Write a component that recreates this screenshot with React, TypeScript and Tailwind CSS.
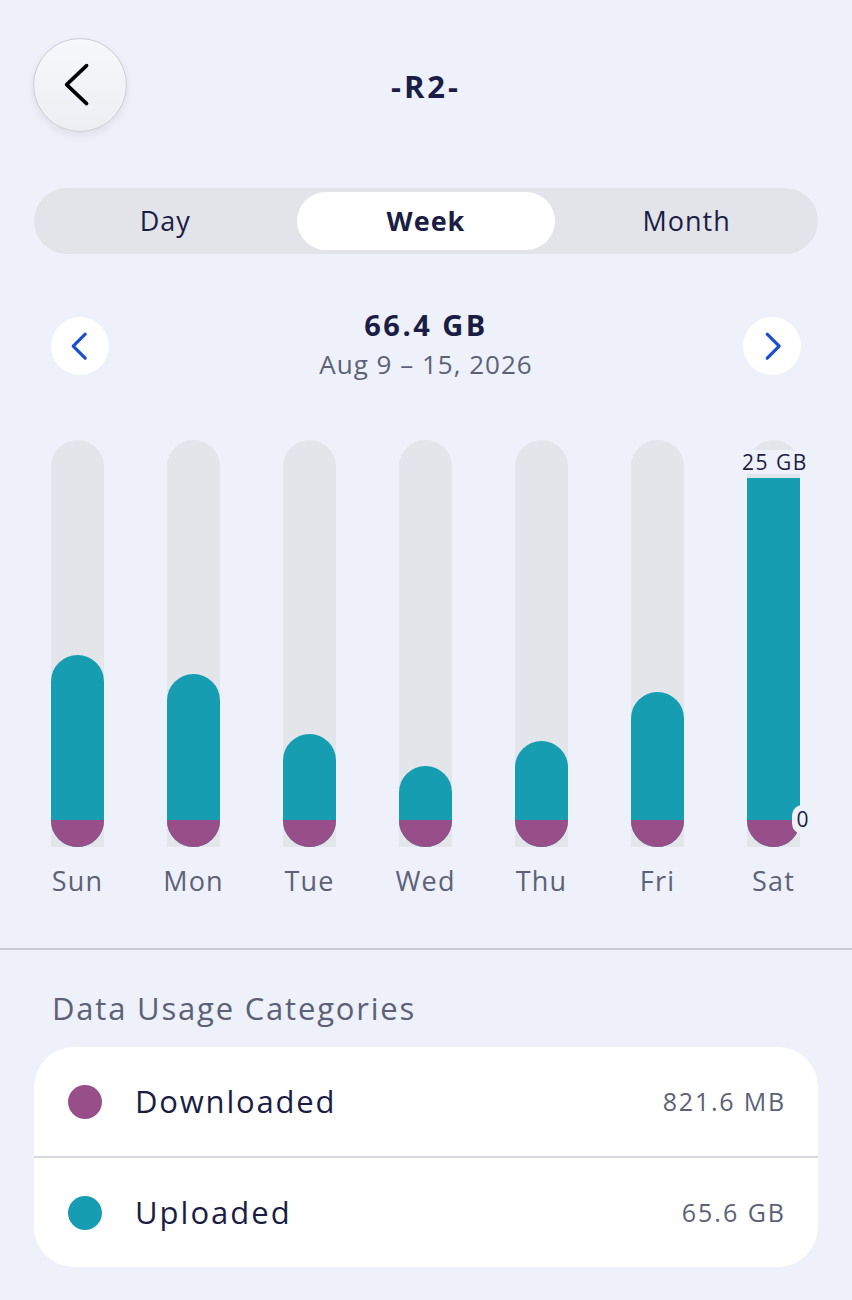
const days = [
  { label: 'Sun', top: 655 },
  { label: 'Mon', top: 674 },
  { label: 'Tue', top: 734 },
  { label: 'Wed', top: 766 },
  { label: 'Thu', top: 741 },
  { label: 'Fri', top: 692 },
  { label: 'Sat', top: 478 },
];

const BASE = 847;

const Chevron = ({ dir, className, w, h, stroke }: { dir: 'left' | 'right'; className: string; w: number; h: number; stroke: number }) => (
  <svg width={w + stroke * 2} height={h + stroke * 2} viewBox={`0 0 ${w + stroke * 2} ${h + stroke * 2}`} className={className} fill="none">
    <polyline
      points={
        dir === 'left'
          ? `${w + stroke},${stroke} ${stroke},${h / 2 + stroke} ${w + stroke},${h + stroke}`
          : `${stroke},${stroke} ${w + stroke},${h / 2 + stroke} ${stroke},${h + stroke}`
      }
      stroke="currentColor"
      strokeWidth={stroke}
      strokeLinecap="round"
      strokeLinejoin="round"
    />
  </svg>
);

const App = () => {
  return (
    <div
      className="w-[852px] h-[1300px] bg-[#eef1f9] text-[#1b1d45] overflow-hidden"
      style={{ fontFamily: '"Open Sans", "Noto Sans", sans-serif' }}
    >
      {/* header */}
      <div className="relative h-[170px] flex items-start">
        <button className="mt-[38px] ml-[33px] w-[94px] h-[94px] rounded-full bg-gradient-to-b from-[#f7f8fb] to-[#eceef3] border border-[#c9ccd4] shadow-[0_4px_10px_rgba(0,0,0,0.07)] flex items-center justify-center">
          <Chevron dir="left" w={20} h={38} stroke={3.6} className="text-black -ml-[6px]" />
        </button>
        <h1 className="absolute left-0 right-0 top-[66px] text-center text-[31px] font-bold leading-[40px] tracking-[3px]">-R2-</h1>
      </div>

      {/* segmented control */}
      <div className="mx-[34px] mt-[18px] h-[66px] rounded-full bg-[#e2e4e9] p-[4px] grid grid-cols-3 items-center text-[27px] tracking-[1px]">
        <div className="text-center -ml-[4px]">Day</div>
        <div className="h-[58px] rounded-full bg-white flex items-center justify-center font-bold">Week</div>
        <div className="text-center ml-[4px]">Month</div>
      </div>

      {/* period nav */}
      <div className="mt-[54px] mx-[51px] flex items-center justify-between">
        <button className="w-[58px] h-[58px] rounded-full bg-white flex items-center justify-center">
          <Chevron dir="left" w={12} h={24} stroke={3.2} className="text-[#1b4fd1] -ml-[2px]" />
        </button>
        <div className="flex flex-col items-center -mt-[2px]">
          <div className="text-[29px] font-bold leading-[38px] tracking-[2.5px]">66.4 GB</div>
          <div className="text-[26px] text-[#5d6177] leading-[40px] tracking-[1px]">Aug 9 – 15, 2026</div>
        </div>
        <button className="w-[58px] h-[58px] rounded-full bg-white flex items-center justify-center">
          <Chevron dir="right" w={12} h={24} stroke={3.2} className="text-[#1b4fd1] ml-[2px]" />
        </button>
      </div>

      {/* chart */}
      <div className="mt-[56px] ml-[51px] flex gap-[63px]">
        {days.map((d, i) => {
          const teal = BASE - d.top;
          const isSat = i === days.length - 1;
          return (
            <div key={d.label} className="w-[53px] flex flex-col items-center">
              <div className="relative w-[53px] h-[407px] rounded-t-full bg-[#e2e5ea] flex flex-col justify-end">
                <div
                  className={`w-full flex flex-col bg-[#179db2] overflow-hidden ${isSat ? 'rounded-t-[6px] rounded-b-full' : 'rounded-full'}`}
                  style={{ height: teal }}
                >
                  <div className="flex-1" />
                  <div className="h-[27px] bg-[#984e88]" />
                </div>
                {isSat && (
                  <>
                    <div className="absolute top-[10px] left-[-6px] px-[1px] bg-[#eef1f9] rounded-[4px] text-[21px] leading-[24px] tracking-[1.5px] whitespace-nowrap">25 GB</div>
                    <div className="absolute top-[365px] left-[45px] w-[21px] h-[29px] bg-[#eef1f9] rounded-full text-[21px] leading-[29px] text-center">0</div>
                  </>
                )}
              </div>
              <div className="mt-[17px] text-[27px] text-[#5d6177] leading-[34px] tracking-[1.2px] whitespace-nowrap">{d.label}</div>
            </div>
          );
        })}
      </div>

      {/* divider */}
      <div className="mt-[50px] h-[2px] bg-[#c8cad4]" />

      {/* categories */}
      <div className="mt-[38px] ml-[52px] text-[31px] text-[#5d6177] leading-[40px] tracking-[1.8px]">Data Usage Categories</div>
      <div className="mt-[19px] mx-[34px] rounded-[40px] bg-white">
        <div className="h-[109px] flex items-center px-[34px]">
          <span className="w-[34px] h-[34px] rounded-full bg-[#984e88]" />
          <span className="ml-[33px] text-[31px] tracking-[1.8px]">Downloaded</span>
          <span className="ml-auto -mr-[2px] text-[25px] text-[#5d6177] tracking-[1.8px]">821.6 MB</span>
        </div>
        <div className="h-[2px] bg-[#d5d7dd]" />
        <div className="h-[109px] flex items-center px-[34px]">
          <span className="w-[34px] h-[34px] rounded-full bg-[#179db2]" />
          <span className="ml-[33px] text-[31px] tracking-[2px]">Uploaded</span>
          <span className="ml-auto -mr-[2px] text-[25px] text-[#5d6177] tracking-[2px]">65.6 GB</span>
        </div>
      </div>
    </div>
  );
};

export default App;
